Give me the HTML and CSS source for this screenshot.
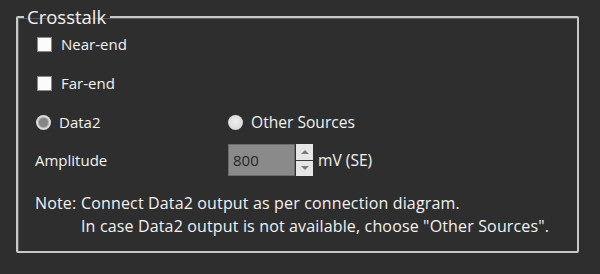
FILE: index.html
```html
<!DOCTYPE html>
<html>
<head>
    <title>Crosstalk</title>
    <link rel="stylesheet" href="styles.css">
</head>
<body>
    <fieldset class="group">
        <legend>Crosstalk</legend>

        <div class="row">
            <span class="check"></span>
            <span class="label">Near-end</span>
        </div>
        <div class="row">
            <span class="check"></span>
            <span class="label">Far-end</span>
        </div>

        <div class="row source-row">
            <div class="option">
                <span class="radio selected"><span class="dot"></span></span>
                <span class="label">Data2</span>
            </div>
            <div class="option">
                <span class="radio"></span>
                <span class="label wide">Other Sources</span>
            </div>
        </div>

        <div class="amp-row">
            <span class="amp-label">Amplitude</span>
            <div class="spinner">
                <div class="spin-value">800</div>
                <div class="spin-buttons">
                    <span class="spin-btn"><span class="arrow-up"></span></span>
                    <span class="spin-btn"><span class="arrow-down"></span></span>
                </div>
            </div>
            <span class="unit">mV (SE)</span>
        </div>

        <div class="note">
            <span class="note-label">Note:</span>
            <div class="note-text">
                <div>Connect Data2 output as per connection diagram.</div>
                <div>In case Data2 output is not available, choose "Other Sources".</div>
            </div>
        </div>
    </fieldset>
</body>
</html>
```

FILE: styles.css
```css
body {
    margin: 0;
    background: #2e2e2e;
    color: #f2f2f2;
    font-family: "Open Sans", "Noto Sans", sans-serif;
    font-size: 15px;
    height: 274px;
    overflow: hidden;
}
.group {
    margin: 6px 0 0 16px;
    width: 563px;
    height: 247px;
    box-sizing: border-box;
    border: 2px solid #c8c8c8;
    border-radius: 2px;
    box-shadow: inset 1px 1px 0 #5a5a5a;
    padding: 4px 0 0 17px;
}
.group legend {
    font-size: 18.5px;
    line-height: 22px;
    padding: 0 4px 0 3px;
    margin-left: -11px;
}
.row {
    display: flex;
    align-items: center;
    height: 24px;
    margin-bottom: 15px;
}
.check {
    width: 13px;
    height: 13px;
    background: #fbfbfb;
    border: 1px solid #8a8a8a;
    margin: 0 9px 0 2px;
}
.source-row {
    margin-bottom: 10px;
}
.option {
    display: flex;
    align-items: center;
    width: 192px;
}
.label.wide {
    font-size: 15.6px;
}
.radio {
    width: 15px;
    height: 15px;
    border-radius: 50%;
    background: radial-gradient(circle at 50% 45%, #f0f0f0, #cfcfcf);
    margin: 0 8px 0 1px;
    display: flex;
    align-items: center;
    justify-content: center;
}
.radio.selected {
    background: #dcdcdc;
}
.radio .dot {
    width: 9px;
    height: 9px;
    border-radius: 50%;
    background: #858585;
    box-shadow: 0 0 0 1px #a8a8a8;
}
.amp-row {
    display: flex;
    align-items: center;
    height: 32px;
}
.amp-label {
    width: 193px;
}
.spinner {
    display: flex;
    height: 32px;
}
.spin-value {
    width: 61px;
    background: #8a8a8a;
    border: 1px solid #6c6c6c;
    color: #262626;
    font-size: 15px;
    line-height: 30px;
    padding-left: 4px;
}
.spin-buttons {
    display: flex;
    flex-direction: column;
    gap: 1px;
    width: 17px;
    background: #3a3a3a;
    margin-left: 1px;
}
.spin-btn {
    flex: 1;
    background: #e6e6e6;
    display: flex;
    align-items: center;
    justify-content: center;
}
.arrow-up {
    border-left: 4px solid transparent;
    border-right: 4px solid transparent;
    border-bottom: 4px solid #7a7a7a;
}
.arrow-down {
    border-left: 4px solid transparent;
    border-right: 4px solid transparent;
    border-top: 4px solid #7a7a7a;
}
.unit {
    margin-left: 5px;
    font-size: 15.6px;
}
.note {
    display: flex;
    margin-top: 16px;
    line-height: 23px;
    font-size: 16px;
    letter-spacing: 0.15px;
}
.note-label {
    width: 46px;
}
```
